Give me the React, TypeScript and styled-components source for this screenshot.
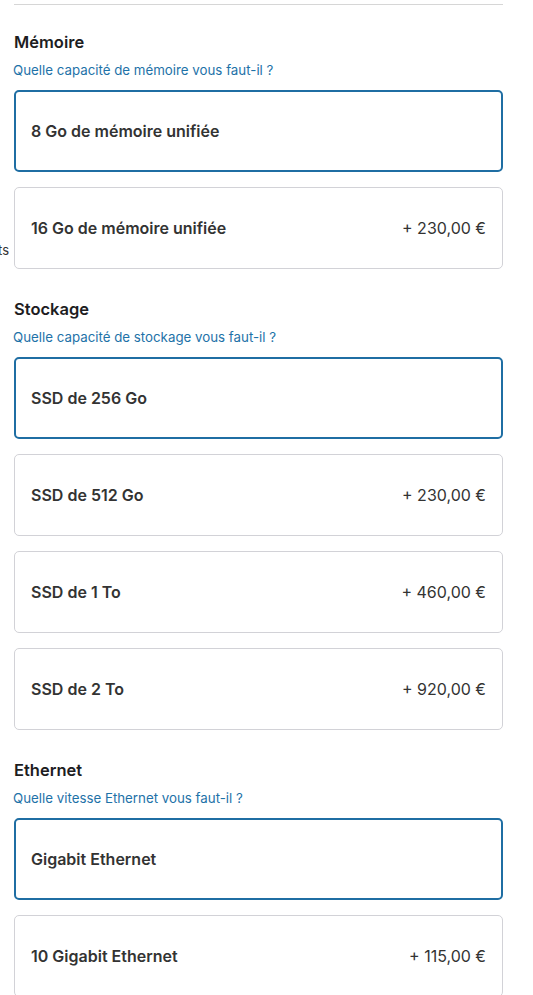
import React from "react"
import styled, { createGlobalStyle } from "styled-components"

const GlobalStyle = createGlobalStyle`
    body {
        margin: 0;
        background: #fff;
        font-family: Inter, "Liberation Sans", Arial, sans-serif;
        color: #1d1d1f;
    }
`;

const Page = styled.div`
    display: grid;
    grid-template-columns: 14px 489px;
    padding-top: 4px;
`;

const Gutter = styled.div`
    display: flex;
    align-items: center;
    justify-content: flex-end;
    padding-top: 44px;
    padding-right: 5px;
    font-size: 13px;
    color: #333;
    overflow: hidden;
    white-space: nowrap;
`;

const Main = styled.div`
    grid-column: 2;
`;

const Divider = styled.hr`
    margin: 0;
    border: none;
    border-top: 1px solid #d6d6d6;
`;

const Section = styled.section`
    padding-top: 27px;
    padding-bottom: 3px;
`;

const Heading = styled.h2`
    margin: 0;
    font-size: 16.5px;
    line-height: 20px;
    font-weight: 600;
    color: #1d1d1f;
`;

const Question = styled.p`
    margin: 9px 0 11px;
    font-size: 13.3px;
    line-height: 18px;
    color: #1e72a8;
    margin-left: -1px;
`;

const OptionList = styled.div`
    display: grid;
    grid-template-columns: 14px 489px;
    margin-left: -14px;
    row-gap: 15px;
`;

const Card = styled.div<{ $selected?: boolean }>`
    grid-column: 2;
    box-sizing: border-box;
    height: 82px;
    display: flex;
    align-items: center;
    justify-content: space-between;
    border-radius: 5px;
    border: ${(p) => (p.$selected ? "2px solid #1f6ea3" : "1px solid #d2d2d7")};
    padding: 0 ${(p) => (p.$selected ? "15px" : "16px")};
`;

const Label = styled.span`
    font-size: 16px;
    font-weight: 600;
    color: #333;
`;

const Price = styled.span`
    font-size: 16px;
    font-weight: 400;
    color: #333;
`;

type Option = { label: string; price?: string; side?: string };

const sections: { title: string; question: string; options: Option[] }[] = [
    {
        title: "Mémoire",
        question: "Quelle capacité de mémoire vous faut-il ?",
        options: [
            { label: "8 Go de mémoire unifiée" },
            { label: "16 Go de mémoire unifiée", price: "+ 230,00 €", side: "ts" },
        ],
    },
    {
        title: "Stockage",
        question: "Quelle capacité de stockage vous faut-il ?",
        options: [
            { label: "SSD de 256 Go" },
            { label: "SSD de 512 Go", price: "+ 230,00 €" },
            { label: "SSD de 1 To", price: "+ 460,00 €" },
            { label: "SSD de 2 To", price: "+ 920,00 €" },
        ],
    },
    {
        title: "Ethernet",
        question: "Quelle vitesse Ethernet vous faut-il ?",
        options: [
            { label: "Gigabit Ethernet" },
            { label: "10 Gigabit Ethernet", price: "+ 115,00 €" },
        ],
    },
];

const App: React.FC = () => {
    return (
        <>
            <GlobalStyle />
            <Page>
                <Main>
                    <Divider />
                    {sections.map((s) => (
                        <Section key={s.title}>
                            <Heading>{s.title}</Heading>
                            <Question>{s.question}</Question>
                            <OptionList>
                                {s.options.map((o, i) => (
                                    <React.Fragment key={o.label}>
                                        <Gutter>{o.side}</Gutter>
                                        <Card $selected={i === 0}>
                                            <Label>{o.label}</Label>
                                            {o.price && <Price>{o.price}</Price>}
                                        </Card>
                                    </React.Fragment>
                                ))}
                            </OptionList>
                        </Section>
                    ))}
                </Main>
            </Page>
        </>
    )
}

export default App;
